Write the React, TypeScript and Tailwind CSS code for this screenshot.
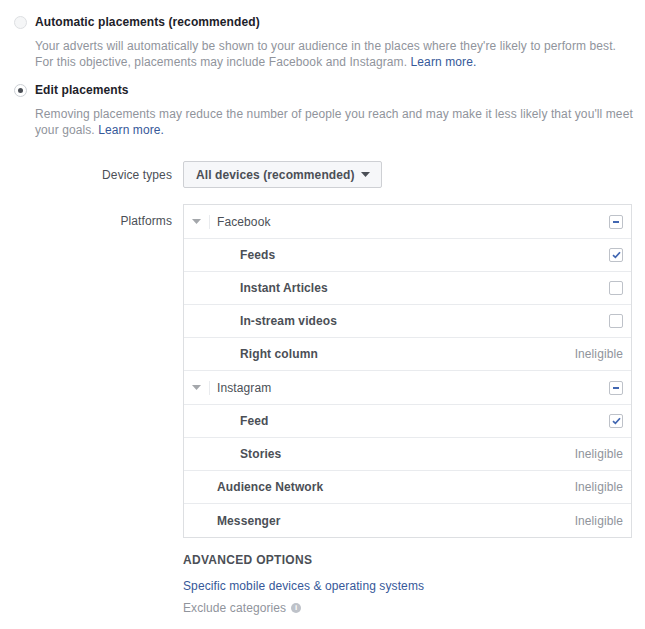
import { ReactNode } from "react";

type Row = {
  label: string;
  level: 0 | 1;
  group?: boolean;
  state: "minus" | "checked" | "empty" | "ineligible";
};

const rows: Row[] = [
  { label: "Facebook", level: 0, group: true, state: "minus" },
  { label: "Feeds", level: 1, state: "checked" },
  { label: "Instant Articles", level: 1, state: "empty" },
  { label: "In-stream videos", level: 1, state: "empty" },
  { label: "Right column", level: 1, state: "ineligible" },
  { label: "Instagram", level: 0, group: true, state: "minus" },
  { label: "Feed", level: 1, state: "checked" },
  { label: "Stories", level: 1, state: "ineligible" },
  { label: "Audience Network", level: 0, state: "ineligible" },
  { label: "Messenger", level: 0, state: "ineligible" },
];

const Radio = ({ checked }: { checked?: boolean }) => (
  <span
    className={`flex h-[13px] w-[13px] shrink-0 items-center justify-center rounded-full border ${
      checked ? "border-[#ccd0d5] bg-white" : "border-[#dddfe2] bg-[#f5f6f7]"
    }`}
  >
    {checked && <span className="h-[5px] w-[5px] rounded-full bg-[#4b4f56]" />}
  </span>
);

const Checkbox = ({ state }: { state: Row["state"] }) => {
  if (state === "ineligible") {
    return <span className="text-[#90949c]">Ineligible</span>;
  }
  return (
    <span className="flex h-[14px] w-[14px] items-center justify-center rounded-[2px] border border-[#bec2c9] bg-white">
      {state === "minus" && <span className="h-[2px] w-[6px] bg-[#4267b2]" />}
      {state === "checked" && (
        <svg width="9" height="8" viewBox="0 0 9 8">
          <path d="M1 4.2 L3.4 6.4 L8 1.2" fill="none" stroke="#4267b2" strokeWidth="1.7" />
        </svg>
      )}
    </span>
  );
};

const Caret = ({ color }: { color: string }) => (
  <svg width="9" height="5" viewBox="0 0 9 5">
    <path d="M0 0 H9 L4.5 5 Z" fill={color} />
  </svg>
);

const Option = ({
  checked,
  title,
  children,
}: {
  checked?: boolean;
  title: string;
  children: ReactNode;
}) => (
  <div>
    <div className="flex h-[16px] items-center">
      <Radio checked={checked} />
      <span className="ml-[8px] font-bold text-[#1d2129]">{title}</span>
    </div>
    <div className="mt-[8px] pl-[21px] text-[#90949c]">{children}</div>
  </div>
);

export default function App() {
  return (
    <div
      className="min-h-screen bg-white pt-[14px] text-[12px] leading-[16px] tracking-[0.1px]"
      style={{ fontFamily: '"Liberation Sans", Arial, sans-serif' }}
    >
      <div className="flex flex-col gap-[12px] pl-[14px]">
        <Option title="Automatic placements (recommended)">
          <div className="whitespace-nowrap">
            Your adverts will automatically be shown to your audience in the places where they're likely to perform best.
          </div>
          <div className="whitespace-nowrap">
            For this objective, placements may include Facebook and Instagram.{" "}
            <span className="text-[#365899]">Learn more.</span>
          </div>
        </Option>
        <Option checked title="Edit placements">
          <div className="whitespace-nowrap">
            Removing placements may reduce the number of people you reach and may make it less likely that you'll meet
          </div>
          <div className="whitespace-nowrap">
            your goals. <span className="text-[#365899]">Learn more.</span>
          </div>
        </Option>
      </div>

      <div className="mt-[23px] grid grid-cols-[172px_1fr] gap-x-[11px]">
        <div className="flex h-[27px] items-center justify-end text-[#4b4f56]">Device types</div>
        <div>
          <div className="flex h-[27px] w-[199px] items-center justify-between rounded-[2px] border border-[#ced0d4] bg-[#f6f7f9] pl-[12px] pr-[11px] font-bold text-[#4b4f56]">
            <span>All devices (recommended)</span>
            <Caret color="#4b4f56" />
          </div>
        </div>

        <div className="mt-[16px] flex h-[34px] items-center justify-end text-[#4b4f56]">Platforms</div>
        <div className="mt-[16px] w-[449px] border border-[#dddfe2]">
          {rows.map((r, i) => (
            <div
              key={r.label}
              className={`flex items-center justify-between pr-[8px] text-[#4b4f56] ${
                i < rows.length - 1 ? "border-b border-[#e9ebee]" : ""
              } ${r.group ? "h-[34px]" : "h-[33px]"}`}
            >
              {r.group ? (
                <div className="flex items-center pl-[8px]">
                  <Caret color="#a4a7ab" />
                  <span className="ml-[8px] h-[14px] w-px bg-[#e9ebee]" />
                  <span className="ml-[7px]">{r.label}</span>
                </div>
              ) : (
                <span className={`font-bold ${r.level === 1 ? "pl-[56px]" : "pl-[33px]"}`}>{r.label}</span>
              )}
              <Checkbox state={r.state} />
            </div>
          ))}
        </div>
      </div>

      <div className="ml-[183px] mt-[14px]">
        <div className="font-bold tracking-[0.3px] text-[#4b4f56]">ADVANCED OPTIONS</div>
        <div className="mt-[10px] text-[#365899]">Specific mobile devices &amp; operating systems</div>
        <div className="mt-[6px] flex items-center text-[#90949c]">
          <span>Exclude categories</span>
          <span className="ml-[5px] flex h-[10px] w-[10px] items-center justify-center rounded-full bg-[#bec2c9] text-[8px] font-bold leading-none text-white">
            i
          </span>
        </div>
      </div>
    </div>
  );
}
